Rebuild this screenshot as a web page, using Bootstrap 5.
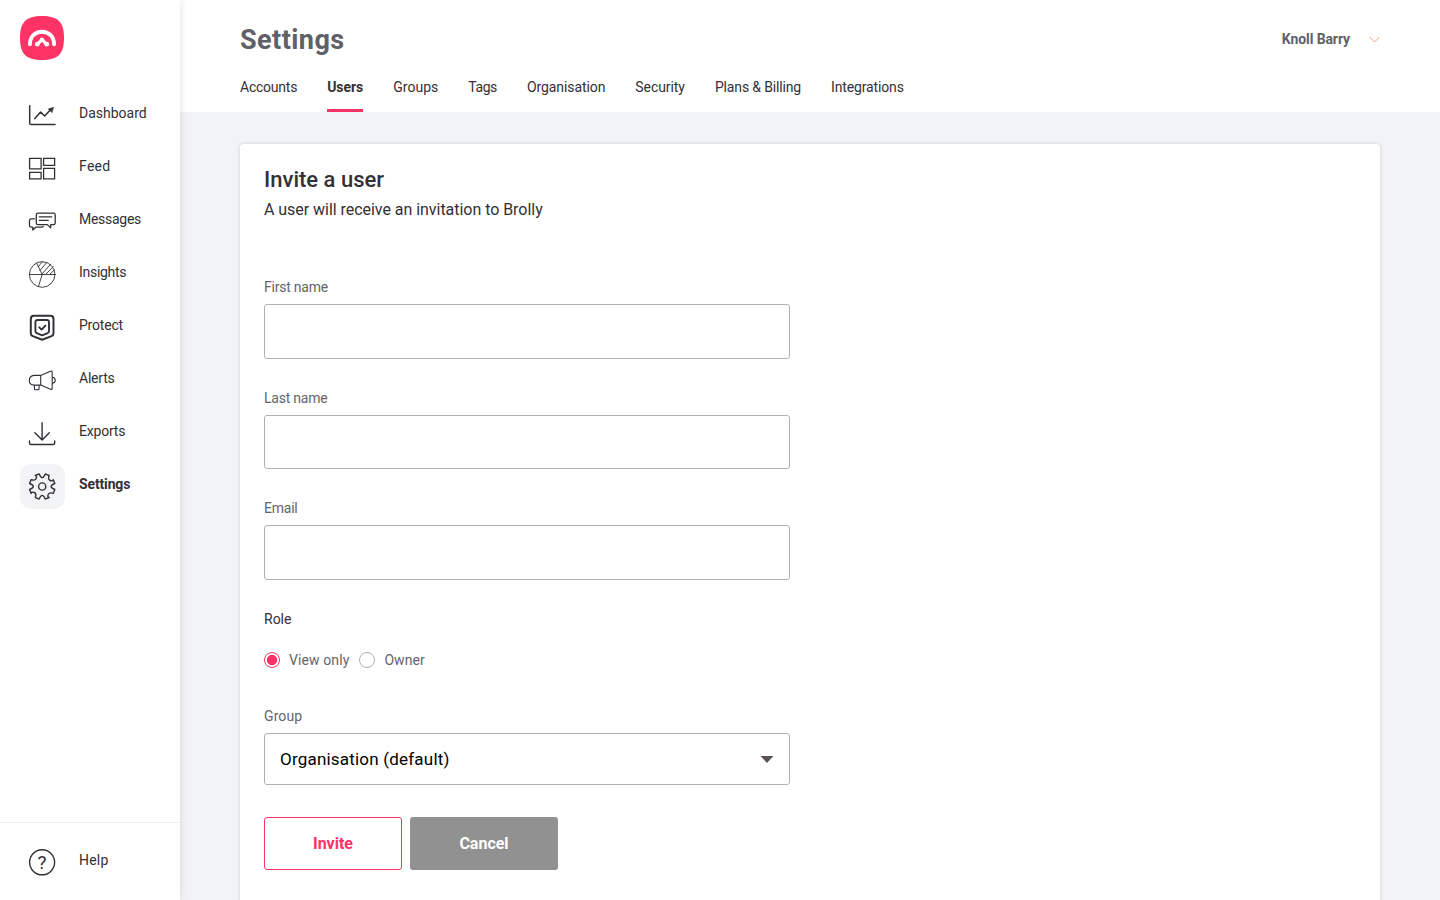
<!DOCTYPE html>
<html lang="en">
<head>
<meta charset="utf-8">
<meta name="viewport" content="width=device-width, initial-scale=1">
<title>Settings – Invite a user</title>
<link href="https://cdn.jsdelivr.net/npm/bootstrap@5.3.0/dist/css/bootstrap.min.css" rel="stylesheet">
<style>
:root{--pink:#ff3366;--ink:#333036;--muted-ink:#65656a}
body{font-family:Roboto,"Liberation Sans",sans-serif;font-size:14px;line-height:20px;color:var(--ink);background:#f2f3f5;height:100vh;overflow:hidden}
.sidebar{width:180px;box-shadow:0 0 8px rgba(0,0,0,.12);z-index:2}
.brand{margin:16px 0 0 20px;width:44px;height:44px}
.side-nav{margin-top:32.6px;gap:8px}
.side-link{height:45px;padding-left:20.4px;gap:13.6px;color:var(--ink);letter-spacing:-.2px}
.side-link:nth-child(1){letter-spacing:0}
.side-link:nth-child(2){letter-spacing:.3px}
.side-link:nth-child(3),.side-link:nth-child(4){letter-spacing:-.28px}
.side-link svg{width:45px;height:45px;border-radius:12px;fill:none;stroke:var(--ink);stroke-width:1.3;stroke-linecap:round;stroke-linejoin:round;flex:none}
.side-link span{margin-top:-5px}
.side-link.active{font-weight:700;letter-spacing:-.14px}
.side-link.active svg{background:#f2f3f5}
.side-foot{height:78px;border-top:1px solid #f0f0f2;padding-top:16.5px}
.side-foot .side-link{letter-spacing:.2px}
.side-foot .side-link span{margin-top:-4px}
.top{height:112px;padding:0 60px}
.top h1{font-size:27px;line-height:32px;margin:24px 0 0;font-weight:700;color:#5f6167;letter-spacing:.45px}
.who{margin-top:29px;font-weight:700;color:#5f6167;gap:19px;letter-spacing:-.1px}
.tabs{gap:30px;height:35px;margin-top:21px}
.tabs a{color:var(--ink);height:35px;white-space:nowrap;letter-spacing:-.15px}
.tabs a:nth-child(1){letter-spacing:-.23px}
.tabs a:nth-child(3){letter-spacing:.02px}
.tabs a:nth-child(4){letter-spacing:-.4px}
.tabs a:nth-child(5){letter-spacing:-.09px}
.tabs a:nth-child(6){letter-spacing:-.06px}
.tabs a.active{font-weight:700;letter-spacing:-.06px;border-bottom:3px solid var(--pink)}
.panel{margin:32px 60px 0;height:800px;padding:24px;border:0;border-radius:4px;box-shadow:0 0 4px rgba(0,0,0,.15)}
.panel h2{font-size:22px;line-height:24px;font-weight:500;margin:0}
.intro{font-size:16px;line-height:24px;letter-spacing:-.04px;margin:6px 0 55.4px}
.fields{width:526px}
.field label.form-label{display:block;color:var(--muted-ink);margin:0 0 7px;line-height:20px;letter-spacing:-.22px}
.field .form-control,.field .form-select{border:1px solid #b1b0b3;border-radius:3px}
.field .form-control{height:54.5px}
.field+.field{margin-top:29px}
.role{margin-top:29.6px}
.roles{margin-top:21px;gap:10px;color:var(--muted-ink);letter-spacing:.1px}
.roles .form-check{padding:0;margin:0;min-height:0;gap:9px}
.roles .form-check-input{width:16px;height:16px;margin:0;float:none;border:1px solid #b1b0b3;background-image:none}
.roles .form-check-input:checked{background:radial-gradient(circle,var(--pink) 0 4.8px,#fff 5.4px);border-color:var(--pink)}
.group{margin-top:36px}
.group label.form-label{letter-spacing:.1px}
.field .form-select{height:52px;padding:0 40px 0 15px;font-size:17px;letter-spacing:.2px;color:#000;background:#fff url("data:image/svg+xml,%3Csvg xmlns='http://www.w3.org/2000/svg' viewBox='0 0 13 7'%3E%3Cpath d='M0 0h13L6.5 7z' fill='%23595357'/%3E%3C/svg%3E") no-repeat right 15px top 22px/14px 7px}
.actions{margin-top:32px;gap:8px}
.actions .btn{height:53px;border-radius:3px;font-size:16px;font-weight:700;padding:0}
.btn-invite{width:138px;color:var(--pink);border:1px solid var(--pink)}
.btn-stop{width:148px;color:#fff;background:#919191}
</style>
</head>
<body class="d-flex">
<aside class="sidebar bg-white d-flex flex-column flex-shrink-0 vh-100 position-relative">
  <svg class="brand flex-shrink-0" viewBox="0 0 44 44"><path fill="#ff3366" d="M22 0C38 0 44 6 44 22S38 44 22 44 0 38 0 22 6 0 22 0z"/><path fill="none" stroke="#fff" stroke-width="3.9" stroke-linecap="round" d="M9.900 28.300C9.900 20.500 15.200 15.800 22 15.800S34.100 20.500 34.100 28.300"/><path fill="none" stroke="#fff" stroke-width="3.100" stroke-linecap="round" stroke-linejoin="round" d="M17.500 28.200 22 23.700l4.500 4.500"/><g fill="#fff"><circle cx="17.300" cy="28.200" r="2.400"/><circle cx="26.700" cy="28.200" r="2.400"/><circle cx="22" cy="23.700" r="2.200"/></g></svg>
  <nav class="side-nav d-flex flex-column">
    <a class="side-link d-flex align-items-center text-decoration-none" href="#"><svg viewBox="0 0 45 45"><path stroke-width="1.500" d="M9.700 12.800V30q0 1.600 1.600 1.600H35"/><path stroke-width="1.500" d="m14.800 25.600 5.800-6.600 4 4 6.400-6.800"/><path fill="#333036" stroke-width=".6" d="m33.300 14.400-5 1.500 3.500 3.500z"/></svg><span>Dashboard</span></a>
    <a class="side-link d-flex align-items-center text-decoration-none" href="#"><svg viewBox="0 0 45 45"><g stroke-linejoin="miter"><path d="M9.600 12.400h11.500v10.500H9.600zM23.600 12.400h11v7h-11zM9.600 26.400h11.500v6.500H9.600zM23.600 22.400h11v10.500h-11z"/></g></svg><span>Feed</span></a>
    <a class="side-link d-flex align-items-center text-decoration-none" href="#"><svg viewBox="0 0 45 45"><path d="M18 14.200h15.500q1.700 0 1.700 1.700v8q0 1.700-1.700 1.700h-2.800v3.300l-3.300-3.300H18q-1.700 0-1.700-1.700v-8q0-1.700 1.700-1.700zM19.300 17.800h12.400M19.300 21.300h9"/><path d="M14.400 19.800h-3.200q-1.700 0-1.700 1.700v5q0 1.700 1.700 1.700h1.600V31l3-2.800h5.800q1.200 0 1.600-.9"/></svg><span>Messages</span></a>
    <a class="side-link d-flex align-items-center text-decoration-none" href="#"><svg viewBox="0 0 45 45"><g stroke-width=".9"><circle cx="22.200" cy="22.500" r="12.800"/><path d="M9.400 22.500H35M16.600 11.100l5.600 11.400-3.800 12.100M18.200 14.700l4-4.800M20 18.400l6.800-7.800M21.900 22l8.800-9.900M26 22l7.300-7.400M30.200 22l4.300-4.200"/></g></svg><span>Insights</span></a>
    <a class="side-link d-flex align-items-center text-decoration-none" href="#"><svg viewBox="0 0 45 45"><path stroke-width="2" d="M14 10.700h16.300q3.200 0 3.200 3.200v14.300q0 2.200-2 2.900l-9.300 3.600-9.400-3.600q-2-.7-2-2.900V13.900q0-3.200 3.200-3.200z"/><path stroke-width="1.900" d="M17.700 15h9.100q2.200 0 2.200 2.200V26q0 1.500-1.400 2.100l-5.400 2.200-5.400-2.200q-1.400-.6-1.400-2.100v-8.800q0-2.200 2.300-2.200zM19.300 22.300l2.300 2.300 3.800-4"/></svg><span>Protect</span></a>
    <a class="side-link d-flex align-items-center text-decoration-none" href="#"><svg viewBox="0 0 45 45"><g stroke-width="1.100"><path d="M20.700 17.400h-6.500q-4.900.5-4.900 5t4.900 4.700h6.500zM20.700 17.400l9.800-4.100q1.700-.6 1.700 1v15.900q0 1.600-1.700 1l-9.800-4.100M32.200 19q3 .6 3 3.300t-3 3.200M14.400 27.200v3.200q0 1.300 1.300 1.300h2.100q1.300 0 1.300-1.300v-3.200"/></g></svg><span>Alerts</span></a>
    <a class="side-link d-flex align-items-center text-decoration-none" href="#"><svg viewBox="0 0 45 45"><path stroke-width="1.400" d="M22.100 11.800v17M14.900 21.800l7.200 7.300 7.200-7.300M9.500 30v1.700q0 1.800 1.800 1.800h21.600q1.800 0 1.800-1.800V30"/></svg><span>Exports</span></a>
    <a class="side-link active d-flex align-items-center text-decoration-none" href="#"><svg viewBox="0 0 45 45"><g transform="translate(22.200 22.500)" stroke-width="1.400"><path d="M3-12.600 6.900-11Q5.400-7 8-6T11-6.900L12.600-3Q8.900-1.500 8.900 0T12.600 3L11 6.900Q7 5.400 6 8T6.900 11L3 12.600Q1.500 8.900 0 8.900T-3 12.600L-6.900 11Q-5.400 7-8 6T-11 6.900L-12.600 3Q-8.900 1.500-8.900 0T-12.600-3L-11-6.900Q-7-5.400-6-8T-6.900-11L-3-12.600Q-1.500-8.900 0-8.900T3-12.600z"/><circle r="3.600"/></g></svg><span>Settings</span></a>
  </nav>
  <div class="side-foot mt-auto"><a class="side-link d-flex align-items-center text-decoration-none" href="#"><svg viewBox="0 0 45 45"><circle cx="22.100" cy="22.300" r="12.500" stroke-width="1.400"/><text x="22.200" y="29" text-anchor="middle" font-size="19" fill="#333036" stroke="none">?</text></svg><span>Help</span></a></div>
</aside>
<div class="flex-grow-1">
  <header class="top bg-white">
    <div class="d-flex justify-content-between align-items-start"><h1>Settings</h1>
      <div class="who d-flex align-items-center"><span>Knoll Barry</span><svg width="11" height="7" viewBox="0 0 11 7" fill="none" stroke="#e0a58c"><path d="m.5 1 5 5 5-5"/></svg></div></div>
    <nav class="tabs d-flex"><a class="text-decoration-none" href="#">Accounts</a><a class="active text-decoration-none" href="#">Users</a><a class="text-decoration-none" href="#">Groups</a><a class="text-decoration-none" href="#">Tags</a><a class="text-decoration-none" href="#">Organisation</a><a class="text-decoration-none" href="#">Security</a><a class="text-decoration-none" href="#">Plans &amp; Billing</a><a class="text-decoration-none" href="#">Integrations</a></nav>
  </header>
  <main class="panel card">
    <h2>Invite a user</h2>
    <p class="intro">A user will receive an invitation to Brolly</p>
    <form class="fields">
      <div class="field"><label class="form-label" for="first">First name</label><input class="form-control" id="first"></div>
      <div class="field"><label class="form-label" for="last">Last name</label><input class="form-control" id="last"></div>
      <div class="field"><label class="form-label" for="email">Email</label><input class="form-control" id="email" type="email"></div>
      <div class="role">Role</div>
      <div class="roles d-flex"><label class="form-check d-flex align-items-center"><input class="form-check-input" type="radio" name="role" checked><span>View only</span></label><label class="form-check d-flex align-items-center"><input class="form-check-input" type="radio" name="role"><span>Owner</span></label></div>
      <div class="field group"><label class="form-label" for="grp">Group</label><select class="form-select" id="grp"><option>Organisation (default)</option></select></div>
      <div class="actions d-flex"><button type="button" class="btn btn-invite">Invite</button><button type="button" class="btn btn-stop">Cancel</button></div>
    </form>
  </main>
</div>
<script src="https://cdn.jsdelivr.net/npm/bootstrap@5.3.0/dist/js/bootstrap.bundle.min.js"></script>
</body>
</html>
